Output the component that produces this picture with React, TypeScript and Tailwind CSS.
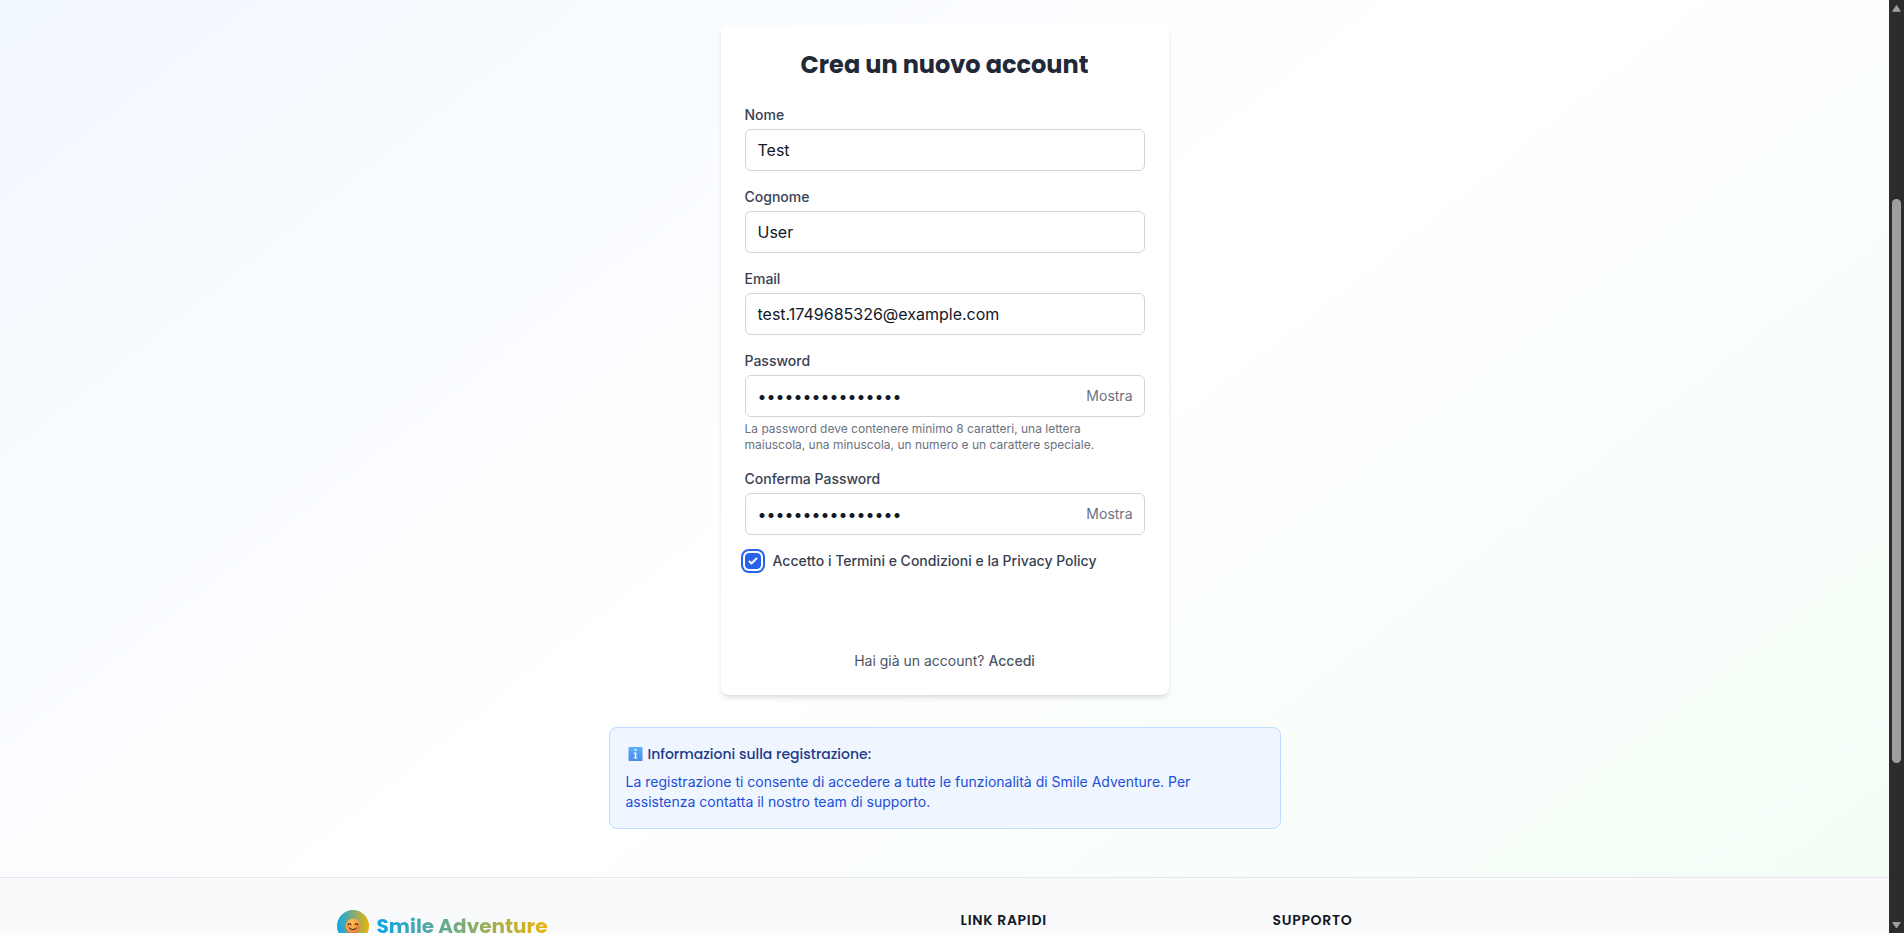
import { useState } from "react";

const inputClass =
  "block w-full rounded-md border border-[#d1d5db] bg-white px-3 py-2 text-base leading-6 text-[#111827] focus:border-[#3b82f6] focus:outline-none";

const labelClass = "mb-1 block text-sm font-medium text-[#374151]";

function TextField({ id, label, type = "text", value }: { id: string; label: string; type?: string; value: string }) {
  return (
    <div>
      <label htmlFor={id} className={labelClass}>
        {label}
      </label>
      <input id={id} type={type} defaultValue={value} className={inputClass} />
    </div>
  );
}

function PasswordField({ id, label, value, hint }: { id: string; label: string; value: string; hint?: string }) {
  const [visible, setVisible] = useState(false);
  return (
    <div>
      <label htmlFor={id} className={labelClass}>
        {label}
      </label>
      <div className="relative">
        <input id={id} type={visible ? "text" : "password"} defaultValue={value} className={inputClass} />
        <button
          type="button"
          onClick={() => setVisible(!visible)}
          className="absolute inset-y-0 right-0 flex items-center pr-3 text-sm text-[#6b7280]"
        >
          {visible ? "Nascondi" : "Mostra"}
        </button>
      </div>
      {hint && <p className="mt-1 text-xs text-[#6b7280]">{hint}</p>}
    </div>
  );
}

function InfoIcon() {
  return (
    <svg viewBox="0 0 18 16" className="h-4 w-[18px]" aria-hidden="true">
      <defs>
        <linearGradient id="info-bg" x1="0" y1="0" x2="0" y2="1">
          <stop offset="0" stopColor="#5cb0fb" />
          <stop offset="1" stopColor="#4a8ae6" />
        </linearGradient>
      </defs>
      <rect x="2.5" y="1" width="14" height="14" rx="1" fill="url(#info-bg)" />
      <rect x="8.6" y="3" width="1.8" height="1.8" fill="#fff" />
      <path d="M7.8 6.4h2.5v5.2h1v1H7.8v-1h1V7.4h-1z" fill="#fff" />
    </svg>
  );
}

function SmileIcon() {
  return (
    <svg viewBox="0 0 16 16" className="h-4 w-4" aria-hidden="true">
      <defs>
        <radialGradient id="smile-face" cx="0.4" cy="0.3" r="0.75">
          <stop offset="0" stopColor="#fdc04d" />
          <stop offset="0.6" stopColor="#f9a048" />
          <stop offset="1" stopColor="#ec6f3c" />
        </radialGradient>
      </defs>
      <circle cx="8" cy="8" r="7.4" fill="url(#smile-face)" />
      <circle cx="3.6" cy="8.6" r="1.6" fill="#f47b45" opacity="0.7" />
      <circle cx="12.4" cy="8.6" r="1.6" fill="#f47b45" opacity="0.7" />
      <path
        d="M3 6.8q1.5-2.4 3 0M10 6.8q1.5-2.4 3 0M4.6 10.2q3.4 2.8 6.8 0"
        fill="none"
        stroke="#4b2f22"
        strokeWidth="1.1"
        strokeLinecap="round"
      />
    </svg>
  );
}

function Scrollbar() {
  return (
    <div className="flex w-[15px] shrink-0 flex-col items-center bg-[#2c2c2c]" aria-hidden="true">
      <svg viewBox="0 0 15 17" className="h-[17px] w-[15px] shrink-0">
        <path d="M7.5 5.5l3.8 5.8h-7.6z" fill="#9f9f9f" stroke="#9f9f9f" strokeLinejoin="round" />
      </svg>
      <div className="grow-[182]" />
      <div className="w-[9px] grow-[564] rounded-full bg-[#9f9f9f]" />
      <div className="grow-[153]" />
      <svg viewBox="0 0 15 17" className="h-[17px] w-[15px] shrink-0">
        <path d="M7.5 12l3.8-5.5h-7.6z" fill="#9f9f9f" stroke="#9f9f9f" strokeLinejoin="round" />
      </svg>
    </div>
  );
}

function RegisterCard() {
  return (
    <div className="w-full max-w-md rounded-lg bg-white p-6 shadow-md">
      <h2 className="mb-6 text-center font-['Poppins','Inter',sans-serif] text-2xl font-bold text-[#1f2937]">
        Crea un nuovo account
      </h2>
      <form className="space-y-4">
        <TextField id="nome" label="Nome" value="Test" />
        <TextField id="cognome" label="Cognome" value="User" />
        <TextField id="email" label="Email" type="email" value="test.1749685326@example.com" />
        <PasswordField
          id="password"
          label="Password"
          value="TestPassword123!"
          hint="La password deve contenere minimo 8 caratteri, una lettera maiuscola, una minuscola, un numero e un carattere speciale."
        />
        <PasswordField id="conferma" label="Conferma Password" value="TestPassword123!" />
        <div className="flex items-center gap-3">
          <span className="grid h-4 w-4">
            <input
              id="termini"
              type="checkbox"
              defaultChecked
              className="peer col-start-1 row-start-1 h-4 w-4 appearance-none rounded border border-[#d1d5db] bg-white ring-2 ring-[#2563eb] ring-offset-2 checked:border-[#2563eb] checked:bg-[#2563eb]"
            />
            <svg
              viewBox="0 0 16 16"
              className="pointer-events-none col-start-1 row-start-1 hidden h-4 w-4 peer-checked:block"
              aria-hidden="true"
            >
              <path
                d="M12.207 4.793a1 1 0 010 1.414l-5 5a1 1 0 01-1.414 0l-2-2a1 1 0 011.414-1.414L6.5 9.086l4.293-4.293a1 1 0 011.414 0z"
                fill="#fff"
              />
            </svg>
          </span>
          <label htmlFor="termini" className="text-sm font-medium text-[#374151]">
            Accetto i Termini e Condizioni e la Privacy Policy
          </label>
        </div>
      </form>
      <p className="mt-20 text-center text-sm text-[#4b5563]">
        Hai già un account?{" "}
        <a href="#accedi" className="font-medium">
          Accedi
        </a>
      </p>
    </div>
  );
}

function FooterHeading({ children }: { children: string }) {
  return (
    <h3 className="font-['Poppins','Inter',sans-serif] text-sm font-semibold tracking-wider text-[#111827] uppercase">
      {children}
    </h3>
  );
}

function Footer() {
  return (
    <footer className="border-t border-[#e5e7eb] bg-[#f9fafb]">
      <div className="mx-auto grid max-w-7xl grid-cols-4 gap-8 px-8 py-8">
        <div className="col-span-2 flex items-center gap-2">
          <span className="flex h-8 w-8 items-center justify-center rounded-full bg-linear-to-r/srgb from-[#0ea5e9] to-[#eab308]">
            <SmileIcon />
          </span>
          <span className="bg-linear-to-r/srgb from-[#0ea5e9] to-[#eab308] bg-clip-text font-['Poppins','Inter',sans-serif] text-xl font-bold text-transparent">
            Smile Adventure
          </span>
        </div>
        <FooterHeading>Link rapidi</FooterHeading>
        <FooterHeading>Supporto</FooterHeading>
      </div>
    </footer>
  );
}

export default function App() {
  return (
    <div className="flex h-screen overflow-hidden font-['Inter',sans-serif]">
      <div className="min-w-0 grow overflow-hidden bg-linear-to-br/srgb from-[#eff6ff] via-white to-[#f0fdf4] bg-[size:100%_159%] bg-[position:0%_54%] bg-no-repeat">
        <main className="flex flex-col items-center px-4 pt-[25px] pb-12">
          <RegisterCard />
          <section className="mt-8 w-full max-w-2xl rounded-lg border border-[#bfdbfe] bg-[#eff6ff] p-4">
            <h3 className="mb-2 flex items-center gap-1 font-['Poppins','Inter',sans-serif] text-sm font-medium text-[#1e3a8a]">
              <InfoIcon />
              Informazioni sulla registrazione:
            </h3>
            <p className="text-sm text-[#1d4ed8]">
              La registrazione ti consente di accedere a tutte le funzionalità di Smile Adventure. Per assistenza
              contatta il nostro team di supporto.
            </p>
          </section>
        </main>
        <Footer />
      </div>
      <Scrollbar />
    </div>
  );
}
